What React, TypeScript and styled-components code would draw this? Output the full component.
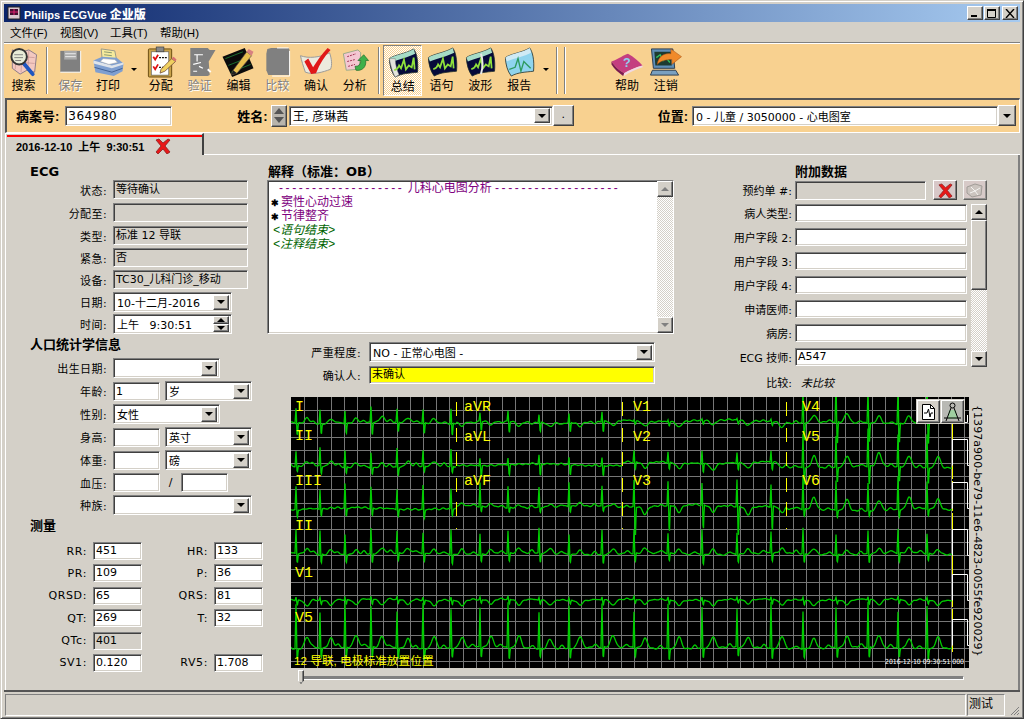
import React from "react";
import styled, { createGlobalStyle, css } from "styled-components";

const GlobalStyle = createGlobalStyle`
    * { box-sizing: border-box; }
    html, body { margin: 0; padding: 0; background: #d4d0c8; overflow: hidden; }
    body { font-family: "DejaVu Sans", "Noto Sans CJK SC", sans-serif; font-size: 11px; color: #000; }
`;

const CJK = `"Liberation Sans", "Noto Sans CJK SC", sans-serif`;
const FACE = "#d4d0c8";
const ORANGE = "#f8d190";

const sunken = css`
    border: 1px solid;
    border-color: #808080 #fff #fff #808080;
    box-shadow: inset 1px 1px 0 #404040, inset -1px -1px 0 #d4d0c8;
`;

const raised = css`
    background-color: ${FACE};
    border: 1px solid;
    border-color: #fff #404040 #404040 #fff;
    box-shadow: inset -1px -1px 0 #808080;
`;

const dither = css`
    background-color: ${FACE};
    background-image: conic-gradient(#fff 25%, transparent 0 50%, #fff 0 75%, transparent 0);
    background-size: 2px 2px;
`;

const Window = styled.div`
    width: 1024px;
    height: 719px;
    display: flex;
    flex-direction: column;
    padding: 3px 3px 2px 3px;
    background: ${FACE};
    border: 1px solid;
    border-color: ${FACE} #404040 #404040 ${FACE};
    box-shadow: inset 1px 1px 0 #fff, inset -1px -1px 0 #808080;
`;

const TitleBar = styled.div`
    height: 18px;
    flex: none;
    display: flex;
    align-items: center;
    padding: 0 2px 0 3px;
    background: linear-gradient(90deg, #0a246a, #a6caf0);
    color: #fff;
    font: bold 11px ${CJK};
`;

const TitleText = styled.span`
    margin-left: 3px;
    flex: 1;

    b {
        font-size: 12px;
        margin-left: 3px;
    }
`;

const CaptionButton = styled.div<{ $gap?: number }>`
    ${raised};
    width: 16px;
    height: 14px;
    margin-left: ${(p) => p.$gap ?? 0}px;
    display: flex;
    align-items: center;
    justify-content: center;
`;

const MenuBar = styled.div`
    height: 21px;
    flex: none;
    display: flex;
    align-items: center;
    padding-left: 6px;
    border-bottom: 1px solid #808080;
    font: 11.5px ${CJK};
`;

const MenuItem = styled.span`
    width: 50px;
    flex: none;
`;

const Toolbar = styled.div`
    height: 55px;
    flex: none;
    display: flex;
    align-items: flex-start;
    background: ${ORANGE};
    border-top: 1px solid #fff;
    padding: 1px 0 0 0;
`;

const ToolButton = styled.div<{ $disabled?: boolean; $pressed?: boolean; $left?: number }>`
    width: ${(p) => (p.$pressed ? 39 : 38.8)}px;
    height: 51px;
    flex: none;
    display: flex;
    flex-direction: column;
    align-items: center;
    margin-left: ${(p) => p.$left ?? 0}px;
    padding-top: 1px;
    font: 12px/14px ${CJK};
    color: ${(p) => (p.$disabled ? "#808080" : "#000")};
    text-shadow: ${(p) => (p.$disabled ? "1px 1px 0 #fff" : "none")};
    ${(p) =>
        p.$pressed &&
        css`
            background-color: ${ORANGE};
            background-image: conic-gradient(#fff 25%, transparent 0 50%, #fff 0 75%, transparent 0);
            background-size: 2px 2px;
            border: 1px solid;
            border-color: #808080 #fff #fff #808080;
        `}

    svg {
        display: block;
        width: 34px;
        height: 32px;
        flex: none;
        margin-bottom: 1px;
    }
`;

const ToolSep = styled.div<{ $left: number }>`
    width: 2px;
    height: 47px;
    flex: none;
    margin: 2px 0 0 ${(p) => p.$left}px;
    border-left: 1px solid #808080;
    border-right: 1px solid #fff;
`;

const DropArrow = styled.div<{ $w: number }>`
    width: ${(p) => p.$w}px;
    flex: none;
    height: 51px;
    display: flex;
    justify-content: center;
    padding-top: 23px;

    &::after {
        content: "";
        width: 0;
        height: 0;
        border: 3px solid transparent;
        border-top: 3px solid #000;
    }
`;

const PatientBar = styled.div`
    height: 35px;
    flex: none;
    display: flex;
    align-items: center;
    background: ${ORANGE};
    border-top: 2px solid #555;
    border-left: 2px solid #555;
    border-bottom: 1px solid #fff;
    border-right: 1px solid #fff;
    margin-left: 1px;
    padding-bottom: 1px;
`;

const BarLabel = styled.span<{ $left: number }>`
    font: bold 13px ${CJK};
    margin-left: ${(p) => p.$left}px;
    white-space: nowrap;
`;

const Field = styled.div<{ $w?: number; $h?: number; $bg?: string; $left?: number }>`
    ${sunken};
    width: ${(p) => (p.$w ? `${p.$w}px` : "auto")};
    height: ${(p) => p.$h ?? 19}px;
    flex: ${(p) => (p.$w ? "none" : "1")};
    margin-left: ${(p) => p.$left ?? 0}px;
    background: ${(p) => p.$bg ?? "#fff"};
    padding-left: 2px;
    line-height: ${(p) => (p.$h ?? 19) - 2}px;
    font-size: 11px;
    white-space: nowrap;
    overflow: hidden;
`;

const BigField = styled(Field)`
    font-size: 12px;
    letter-spacing: 0.5px;
`;

const ComboBox = styled.div<{ $w?: number; $h?: number; $left?: number }>`
    ${sunken};
    width: ${(p) => (p.$w ? `${p.$w}px` : "auto")};
    height: ${(p) => p.$h ?? 20}px;
    flex: ${(p) => (p.$w ? "none" : "1")};
    margin-left: ${(p) => p.$left ?? 0}px;
    background: #fff;
    display: flex;
    align-items: center;
    padding: 0 2px 0 3px;
    font-size: 11px;
    white-space: nowrap;
    overflow: hidden;
`;

const ComboText = styled.span<{ $size?: number }>`
    flex: 1;
    font-size: ${(p) => p.$size ?? 11}px;
`;

const ArrowDown = styled.div<{ $h?: number; $w?: number; $left?: number; $grey?: boolean }>`
    ${raised};
    width: ${(p) => p.$w ?? 16}px;
    height: ${(p) => p.$h ?? 15}px;
    flex: none;
    margin-left: ${(p) => p.$left ?? 0}px;
    display: flex;
    align-items: center;
    justify-content: center;

    &::after {
        content: "";
        border: 4px solid transparent;
        border-bottom: 0;
        border-top: 4px solid ${(p) => (p.$grey ? "#808080" : "#000")};
    }
`;

const ArrowUp = styled(ArrowDown)`
    &::after {
        border-top: 0;
        border-bottom: 4px solid ${(p) => (p.$grey ? "#808080" : "#000")};
    }
`;

const SortButton = styled.div`
    ${raised};
    width: 16px;
    height: 22px;
    flex: none;
    margin-left: 3px;
    background: #b8b4ac;
    display: flex;
    flex-direction: column;
    align-items: center;
    justify-content: center;
    gap: 3px;

    &::before {
        content: "";
        border: 5px solid transparent;
        border-top: 0;
        border-bottom: 6px solid #555;
    }

    &::after {
        content: "";
        border: 5px solid transparent;
        border-bottom: 0;
        border-top: 6px solid #555;
    }
`;

const DotButton = styled.div`
    ${raised};
    width: 21px;
    height: 21px;
    flex: none;
    text-align: center;
    line-height: 17px;
`;

const TabStrip = styled.div`
    height: 22px;
    flex: none;
    display: flex;
    align-items: stretch;
`;

const Tab = styled.div`
    width: 199px;
    margin-left: 1px;
    display: flex;
    align-items: center;
    padding: 2px 0 0 10px;
    border-top: 1px solid #fff;
    border-left: 1px solid #fff;
    border-right: 2px solid #404040;
    position: relative;
    font: bold 11px ${CJK};
    word-spacing: 3px;

    &::before {
        content: "";
        position: absolute;
        top: 1px;
        left: 1px;
        right: 0;
        height: 2px;
        background: #f00;
    }

    svg {
        margin-left: 11px;
    }
`;

const TabRest = styled.div`
    flex: 1;
    border-bottom: 1px solid #fff;
`;

const Content = styled.div`
    flex: 1;
    min-height: 0;
    display: flex;
    border-left: 1px solid #fff;
    border-right: 2px solid #808080;
    margin-left: 1px;
    padding: 8px 0 0 24px;
`;

const LeftColumn = styled.div`
    width: 233px;
    flex: none;
    display: flex;
    flex-direction: column;
`;

const Heading = styled.div<{ $mt?: number; $h?: number; $indent?: number }>`
    height: ${(p) => p.$h ?? 17}px;
    margin-top: ${(p) => p.$mt ?? 0}px;
    padding-left: ${(p) => p.$indent ?? 0}px;
    font: bold 13px/${(p) => p.$h ?? 17}px "DejaVu Sans", "Noto Sans CJK SC", sans-serif;
    white-space: nowrap;
`;

const FormRow = styled.div<{ $mt?: number }>`
    display: flex;
    align-items: center;
    margin-top: ${(p) => p.$mt ?? 0}px;
`;

const Label = styled.span<{ $w: number; $gap?: number; $sp?: number }>`
    width: ${(p) => p.$w}px;
    flex: none;
    margin-right: ${(p) => p.$gap ?? 6}px;
    text-align: right;
    font-size: 11px;
    letter-spacing: ${(p) => p.$sp ?? 0.4}px;
    white-space: nowrap;
`;

const Slash = styled.span`
    width: 21px;
    flex: none;
    text-align: center;
`;

const SpinGroup = styled.div`
    display: flex;
    flex-direction: column;
    flex: none;
    width: 16px;
`;

const MeasureGrid = styled.div`
    display: grid;
    grid-template-columns: 57px 49px 60px 49px;
    column-gap: 6px;
    grid-auto-rows: 18px;
    row-gap: 4.4px;
    margin-top: 8px;
    align-items: center;

    span {
        text-align: right;
        letter-spacing: 0.6px;
    }
`;

const RightColumn = styled.div`
    width: 733px;
    flex: none;
    margin-left: 4px;
    display: flex;
    flex-direction: column;
`;

const TopArea = styled.div`
    height: 234px;
    flex: none;
    display: flex;
`;

const InterpPanel = styled.div`
    width: 407px;
    flex: none;
`;

const InterpBox = styled.div`
    ${sunken};
    height: 154px;
    background: #fff;
    display: flex;
`;

const InterpText = styled.div`
    flex: 1;
    padding: 0 0 0 3px;
    overflow: hidden;
`;

const InterpLine = styled.div<{ $note?: boolean; $center?: boolean }>`
    height: 14px;
    line-height: 14px;
    font-size: 12px;
    color: ${(p) => (p.$note ? "#006400" : "#800080")};
    font-style: ${(p) => (p.$note ? "italic" : "normal")};
    font-family: ${CJK};
    padding-left: ${(p) => (p.$center ? 8 : p.$note ? 2 : 0)}px;
    white-space: nowrap;

    b {
        color: #000;
        font-size: 9px;
        margin-right: 2px;
    }
`;

const DashRun = styled.span`
    letter-spacing: 2.6px;
`;

const VScroll = styled.div<{ $w?: number }>`
    ${dither};
    width: ${(p) => p.$w ?? 16}px;
    flex: none;
    display: flex;
    flex-direction: column;
    justify-content: space-between;
`;

const AddPanel = styled.div`
    width: 305px;
    flex: none;
    margin-left: 18px;
`;

const AddRows = styled.div`
    display: flex;
    margin-top: 4px;
`;

const AddFields = styled.div`
    width: 275px;
    flex: none;
`;

const IconButton = styled.div<{ $left: number; $dim?: boolean }>`
    ${raised};
    width: 24px;
    height: 20px;
    flex: none;
    margin-left: ${(p) => p.$left}px;
    background: #d8c8c8;
    opacity: ${(p) => (p.$dim ? 0.75 : 1)};
    display: flex;
    align-items: center;
    justify-content: center;
`;

const ScrollThumb = styled.div`
    ${raised};
    height: 70px;
    width: 16px;
    flex: none;
`;

const ScrollColumn = styled(VScroll)`
    margin-left: 4px;
    justify-content: flex-start;
    height: 163px;
`;

const ScrollFill = styled.div`
    flex: 1;
`;

const Compare = styled.em`
    margin-left: 6px;
    font-size: 11px;
`;

const EcgRow = styled.div`
    margin: 0 0 0 24px;
    display: flex;
    height: 271px;
    flex: none;
`;

const EcgFrame = styled.div`
    width: 678px;
    height: 271px;
    flex: none;
    position: relative;
    background: #000;

    > svg {
        display: block;
    }
`;

const EcgTools = styled.div`
    position: absolute;
    top: 2px;
    right: 4px;
    display: flex;
    gap: 1px;
    padding: 1px;
    background: ${FACE};
`;

const EcgToolButton = styled.div<{ $pressed?: boolean }>`
    ${raised};
    width: 23px;
    height: 23px;
    background: ${(p) => (p.$pressed ? "#b9b9b4" : FACE)};
    display: flex;
    align-items: center;
    justify-content: center;
`;

const StudyId = styled.div`
    writing-mode: vertical-rl;
    margin-left: 2px;
    padding-top: 8px;
    font-size: 11px;
    letter-spacing: 0.05px;
    white-space: nowrap;
`;

const SliderRow = styled.div`
    height: 16px;
    width: 666px;
    margin: 2px 0 0 31px;
    position: relative;
    display: flex;
    align-items: center;
`;

const SliderTrack = styled.div`
    flex: 1;
    height: 4px;
    ${sunken};
    box-shadow: none;
    background: #808080;
`;

const SliderThumb = styled.div`
    position: absolute;
    left: 0;
    top: 0;
    width: 6px;
    height: 14px;
    ${raised};
    clip-path: polygon(0 0, 100% 0, 100% 75%, 50% 100%, 0 75%);
`;

const StatusBar = styled.div`
    height: 26px;
    flex: none;
    display: flex;
    align-items: stretch;
    border-top: 2px solid #555;
    padding: 2px 14px 0 1px;
    position: relative;
`;

const StatusPane = styled.div<{ $w?: number }>`
    width: ${(p) => (p.$w ? `${p.$w}px` : "auto")};
    flex: ${(p) => (p.$w ? "none" : "1")};
    margin-right: 1px;
    border: 1px solid;
    border-color: #808080 #fff #fff #808080;
    padding-left: 1px;
    line-height: 19px;
    font-size: 12px;
`;

const Grip = styled.svg`
    position: absolute;
    right: 0;
    bottom: 0;
`;

/* ---------- icons ---------- */

const EcgSheet: React.FC<{ split?: boolean; light?: boolean; curl?: boolean }> = ({ split, light, curl }) => (
    <svg viewBox="0 0 34 33">
        <path
            d="M3 12C8 8 20 7 28 2c3 4 5 12 4 24-8 1-16 1-23 5C5 26 3 18 3 12z"
            fill={light ? "#8fd4ee" : "#060a3a"}
            stroke="#1b2a2a"
            strokeWidth={0.8}
        />
        <path d="M3 12C8 8 20 7 28 2l1.500 5C22 11 11 13 4.500 16z" fill={light ? "#cfeaf5" : "#a6dcc8"} />
        {curl && <path d="M3 12c1 6 3 14 6 19 2-1 3-2 4-2-2-5-4-10-4-17z" fill="#e4e4dc" stroke="#777" strokeWidth={0.5} />}
        {light ? (
            <path d="M7 24l6-2 3-9 3 13 3-10 3 3 4 4" fill="none" stroke="#2e9a5e" strokeWidth={1.4} />
        ) : (
            <path d="M8 24c3-1 4-2 5-5l2 3 3-9 2 10 3-4 3 2 2-10 1 12" fill="none" stroke="#8fe03c" strokeWidth={1.8} />
        )}
        {split && <path d="M18 8c2 6 2 14 0 21" fill="none" stroke="#e8e8e8" strokeWidth={2} />}
    </svg>
);

const SearchIcon = () => (
    <svg viewBox="0 0 34 33">
        <path d="M6 4l8 3 9-3 8 5-2 18-8-2-7 4-8-6z" fill="#f3c8c0" stroke="#8a7a88" />
        <path d="M10 6l-1 18M16 7l-1 20M23 5l-1 20M5 10l24 2M6 16l23 2" stroke="#b88" strokeWidth={0.6} />
        <path d="M17 17l10 12" stroke="#1f56c0" strokeWidth={4} strokeLinecap="round" />
        <circle cx="13" cy="11" r="8" fill="#e8ecd8" stroke="#333" strokeWidth={2} />
        <path d="M8 9h9M8 12h9M9 15h6" stroke="#777" strokeWidth={0.9} />
    </svg>
);

const SaveIcon = () => (
    <svg viewBox="0 0 34 33">
        <rect x="7" y="5" width="21" height="22" fill="#808080" />
        <path d="M28 5v22H7" fill="none" stroke="#fff" />
        <rect x="11" y="5" width="13" height="9" fill="#aaa" />
        <path d="M12 8h11M12 11h11" stroke="#eee" />
    </svg>
);

const PrintIcon = () => (
    <svg viewBox="0 0 34 33">
        <path d="M10 3l14 2 2 10-15-1z" fill="#f6ea9c" stroke="#998" />
        <path d="M13 6l8 1M13 9l8 1" stroke="#8a9a70" />
        <path d="M2 15l9-4 15 1 7 6-1 8-9 5-19-4z" fill="#7f9fd0" />
        <path d="M2 15l19 5 12-3v2l-12 4-19-5z" fill="#dfe4ea" />
        <path d="M12 13l12 1 3 3-9 2-9-3z" fill="#fff" stroke="#999" strokeWidth={0.5} />
        <path d="M3 22l18 5 11-4" fill="none" stroke="#3f5f95" />
    </svg>
);

const AssignIcon = () => (
    <svg viewBox="0 0 34 33">
        <rect x="4" y="3" width="24" height="29" rx="1" fill="#c9a24a" stroke="#6a4c12" />
        <rect x="7" y="6" width="18" height="24" fill="#fff" stroke="#555" strokeWidth={0.6} />
        <rect x="12" y="1" width="8" height="5" fill="#888" stroke="#333" strokeWidth={0.6} />
        <path d="M9 11l2 3 3-5M9 21l2 3 3-5" fill="none" stroke="#e01010" strokeWidth={1.8} />
        <path d="M15 12h8M15 22h5" stroke="#111" strokeDasharray="2 1" strokeWidth={1.4} />
        <path d="M17 24l11-11 4 3-11 10-5 2z" fill="#f0d060" stroke="#704a3a" strokeWidth={0.8} />
        <path d="M28 13l4 3 1-2-3-3z" fill="#d87070" />
    </svg>
);

const VerifyIcon = () => (
    <svg viewBox="0 0 34 33">
        <path d="M7 2h18l2 2h6l-7 12 1 14-2 1H7z" fill="#808080" />
        <path d="M11 9h9M14 9v7M10 19l8-2M16 21l4 2M10 26h4" stroke="#fff" strokeWidth={1.2} />
        <path d="M25 24l3 3" stroke="#fff" strokeWidth={2} />
    </svg>
);

const EditIcon = () => (
    <svg viewBox="0 0 34 33">
        <path d="M1 11L24 2l9 21-22 9z" fill="#0b0b0b" />
        <path d="M4 13l18-7M7 20l18-7M10 27l20-8" stroke="#1f8a3a" strokeWidth={0.8} />
        <path d="M12 25l14-19 5 4-15 18-6 2z" fill="#e8c050" stroke="#544" strokeWidth={0.7} />
        <path d="M26 6l2-3 5 3-2 4z" fill="#d88080" />
        <path d="M10 30l2-5 4 3z" fill="#222" />
    </svg>
);

const CompareIcon = () => (
    <svg viewBox="0 0 34 33">
        <path d="M7 3l4-1h18l1 2v26H8l-2-5V8z" fill="#808080" />
        <path d="M17 2h12" stroke="#fff" />
        <path d="M30 5v26H12" fill="none" stroke="#fff" />
    </svg>
);

const ConfirmIcon = () => (
    <svg viewBox="0 0 34 33">
        <path d="M1 10c8 3 20 2 30-3 2 6 3 12 1 17-8 3-18 6-26 3C4 21 2 15 1 10z" fill="#eceade" stroke="#999" />
        <path d="M9 13l5 9c5-8 9-14 15-20l3 2c-6 6-11 14-15 24l-5 1-7-13z" fill="#e01818" />
    </svg>
);

const AnalyzeIcon = () => (
    <svg viewBox="0 0 34 33">
        <path d="M5 8l15-4 3 3-2 17-13 1z" fill="#f4c7d2" stroke="#9a8" />
        <path d="M9 11l9-3M9 16l8-2M10 21l7-2" stroke="#a03050" strokeDasharray="2 1" />
        <path d="M18 25c6 1 11-3 10-10h3l-5-6-6 6h3c0 4-2 6-6 6z" fill="#3fb04a" stroke="#1e6a2a" strokeWidth={0.7} />
    </svg>
);

const HelpIcon = () => (
    <svg viewBox="0 0 34 33">
        <path d="M1 16C9 13 14 9 18 8c6 3 11 8 15 12-7 2-14 5-19 8-5-3-9-6-13-12z" fill="#c43f80" />
        <path d="M1 16c4 6 8 9 13 12l-1 3C8 27 4 24 1 19z" fill="#7a1a50" />
        <path d="M14 28c5-3 12-6 19-8v2c-7 2-13 5-19 9z" fill="#f0d8e4" />
        <text x="13" y="22" fontSize="13" fontWeight="700" fill="#8fd0f0" fontFamily="Liberation Sans">?</text>
    </svg>
);

const LogoutIcon = () => (
    <svg viewBox="0 0 34 33">
        <path d="M2 3h22l2 20H4z" fill="#5f8fb8" stroke="#2a3c50" />
        <path d="M5 6h17l1 14H6z" fill="#1c3a30" />
        <path d="M7 12l4-3 3 6 3-3 4 5" fill="none" stroke="#2fc060" strokeWidth={1.4} />
        <path d="M3 25h24l3 5H1z" fill="#7aa0c0" stroke="#2a3c50" />
        <path d="M8 19c1-8 7-12 14-11V3l11 8-10 8v-5c-6 0-11 1-15 5z" fill="#f08a2a" stroke="#a04a10" strokeWidth={0.5} />
    </svg>
);

const RedX: React.FC<{ size: number }> = ({ size }) => (
    <svg width={size} height={size} viewBox="0 0 16 16">
        <path
            d="M1 2l3-1 4 4 5-4 2 1-5 6 5 6-3 2-4-5-5 5-2-2 5-6z"
            fill="#e81818"
            stroke="#8a2020"
            strokeWidth={0.8}
        />
    </svg>
);

const WorkIcon = () => (
    <svg width="20" height="16" viewBox="0 0 20 16">
        <path d="M2 5l8-3 7 2-1 9-9 2-5-4z" fill="#c8c0bc" stroke="#908c88" />
        <path d="M6 5l4 4 5-3M5 11l5-2 3 4" fill="none" stroke="#fff" />
    </svg>
);

const SheetPlusIcon = () => (
    <svg width="15" height="18" viewBox="0 0 15 18">
        <path d="M1.500 1.500h8l4 4v11h-12z" fill="#fff" stroke="#000" />
        <path d="M9.500 1.500v4h4" fill="none" stroke="#000" />
        <path d="M3 10h3l1.500-4 1.500 8 1-4h2" fill="none" stroke="#000" />
    </svg>
);

const CaliperIcon = () => (
    <svg width="19" height="20" viewBox="0 0 19 20">
        <path d="M6 8c-1 4-1 7-1 9h9c0-3 0-5-1-9z" fill="#9fcfa0" />
        <circle cx="9.500" cy="3.500" r="2.500" fill="none" stroke="#000" />
        <path d="M8 6L3 19M11 6l5 13M1 16h17" fill="none" stroke="#000" />
    </svg>
);

/* ---------- ecg drawing ---------- */

const ORIGIN_X = 291;
const ORIGIN_Y = 397;
const BEATS = [296, 320, 345, 371, 397, 423, 451, 480, 508, 539, 569, 602, 634, 668, 702, 737, 771, 803, 836, 868, 898, 927];

interface ITrace {
    from: number;
    to: number;
    base: number;
    r: number;
    s: number;
    p: number;
    t: number;
    seed: number;
    gain?: number;
}

const TRACES: ITrace[] = [
    { from: 291, to: 456, base: 423, r: 14, s: 13, p: 2, t: 5, seed: 1 },
    { from: 456, to: 622, base: 422, r: 9, s: 12, p: -1.500, t: -4, seed: 2 },
    { from: 622, to: 786, base: 421, r: 2, s: 4, p: 1, t: -5, seed: 3 },
    { from: 786, to: 952, base: 423, r: 34, s: 24, p: 2, t: 8, seed: 4 },
    { from: 291, to: 456, base: 467, r: 17, s: 8, p: 3, t: 5, seed: 5 },
    { from: 456, to: 622, base: 465, r: 8, s: 13, p: 1, t: 0.500, seed: 6 },
    { from: 622, to: 786, base: 463, r: 12, s: 9, p: 1, t: -6, seed: 7 },
    { from: 786, to: 952, base: 467, r: 34, s: 20, p: 2, t: 12, seed: 8 },
    { from: 291, to: 456, base: 509, r: 22, s: 9, p: 1, t: 1, seed: 9 },
    { from: 456, to: 622, base: 507, r: 22, s: 6, p: 2, t: 3, seed: 10 },
    { from: 622, to: 786, base: 506, r: 24, s: 32, p: 1, t: -7, seed: 11 },
    { from: 786, to: 952, base: 510, r: 30, s: 8, p: 2, t: 11, seed: 12 },
    { from: 291, to: 952, base: 554, r: 23, s: 10, p: 3, t: 5, seed: 13 },
    { from: 291, to: 952, base: 600, r: 3, s: 5, p: 1, t: -5, seed: 14, gain: 0.6 },
    { from: 291, to: 952, base: 648, r: 41, s: 12, p: 3, t: 11, seed: 15 },
];

const gauss = (d: number, w: number) => Math.exp(-(d * d) / (2 * w * w));
const spike = (d: number, w: number) => Math.max(0, 1 - Math.abs(d) / w);

const tracePoints = (tr: ITrace) => {
    const pts: string[] = [];
    for (let x = tr.from; x <= tr.to; x += 0.5) {
        let v = 0;
        BEATS.forEach((b, i) => {
            const d = x - b;
            if (Math.abs(d) > 20) return;
            const k = 1 + 0.12 * Math.sin(i * 2.3 + tr.seed);
            v += tr.p * gauss(d + 7, 1.8);
            v += tr.r * k * spike(d, 1);
            v -= tr.s * k * spike(d - 1.3, 1);
            v += tr.t * k * gauss(d - 11, 2.4);
        });
        const wander = (tr.gain ?? 1) * (0.9 * Math.sin(x * 0.05 + tr.seed) + 0.5 * Math.sin(x * 0.9 + tr.seed * 2));
        pts.push(`${x - ORIGIN_X},${(tr.base - v - wander - ORIGIN_Y).toFixed(1)}`);
    }
    return pts.join(" ");
};

const LEAD_LABELS: [string, number, number][] = [
    ["I", 295, 411],
    ["II", 295, 440],
    ["III", 295, 485],
    ["II", 295, 530],
    ["aVR", 464, 411],
    ["aVL", 464, 441],
    ["aVF", 464, 485],
    ["V1", 633, 411],
    ["V2", 633, 441],
    ["V3", 633, 485],
    ["V4", 802, 411],
    ["V5", 802, 441],
    ["V6", 802, 485],
    ["V1", 295, 577],
    ["V5", 295, 622],
];

const PULSE_BASES = [465, 508, 555, 600, 645];
const GRID = 13.2;

const EcgChart = () => {
    const vLines = Array.from({ length: 51 }, (_, i) => Math.round((i + 1) * GRID) + 0.5);
    const hLines = Array.from({ length: 20 }, (_, i) => Math.round((i + 1) * GRID) + 0.5);
    return (
        <svg width="678" height="271" viewBox="0 0 678 271">
            <g stroke="#777" strokeWidth={1}>
                {vLines.map((x) => (
                    <line key={`v${x}`} x1={x} y1={0} x2={x} y2={271} />
                ))}
                {hLines.map((y) => (
                    <line key={`h${y}`} x1={0} y1={y} x2={678} y2={y} />
                ))}
            </g>
            {TRACES.map((tr) => (
                <polyline key={tr.seed} points={tracePoints(tr)} fill="none" stroke="#00cc00" strokeWidth={1.3} />
            ))}
            {[165.5, 331.5, 495.5].map((x) => (
                <line key={x} x1={x} y1={5} x2={x} y2={132} stroke="#ffff00" strokeWidth={1} strokeDasharray="14 12 14 10" />
            ))}
            <line x1={661.5} y1={20} x2={661.500} y2={255} stroke="#ffff00" strokeDasharray="30 2" />
            {PULSE_BASES.map((b) => {
                const y = b - ORIGIN_Y + 0.5;
                return <path key={b} d={`M661.500 ${y}V${y - 26}H676.500V${y}H678`} fill="none" stroke="#fff" />;
            })}
            <path d="M661.500 25.500H676.500V18" fill="none" stroke="#fff" />
            {LEAD_LABELS.map(([t, x, y]) => (
                <text key={`${t}${x}${y}`} x={x - ORIGIN_X} y={y - ORIGIN_Y} fill="#ffff00" fontSize="15" fontFamily="Liberation Mono">
                    {t}
                </text>
            ))}
            <text x={3} y={268} fill="#ffff00" fontSize="11.700" fontFamily="Liberation Sans, Noto Sans CJK SC">
                12 导联, 电极标准放置位置
            </text>
            <text x={594} y={267} fill="#fff" fontSize="7" fontFamily="DejaVu Sans" textLength={79} lengthAdjust="spacingAndGlyphs">
                2016-12-10 09:30:51 000
            </text>
        </svg>
    );
};

/* ---------- page ---------- */

const MEASURES: [string, string, boolean?][] = [
    ["RR:", "451"],
    ["HR:", "133"],
    ["PR:", "109"],
    ["P:", "36"],
    ["QRSD:", "65"],
    ["QRS:", "81"],
    ["QT:", "269"],
    ["T:", "32"],
    ["QTc:", "401", true],
    ["", ""],
    ["SV1:", "0.120"],
    ["RV5:", "1.708"],
];

const App = () => {
    return (
        <>
            <GlobalStyle />
            <Window>
                <TitleBar>
                    <svg width="14" height="14" viewBox="0 0 14 14">
                        <rect x="1" y="1" width="12" height="12" fill="#d8c8d0" stroke="#222" />
                        <rect x="3" y="3" width="8" height="6" fill="#401030" />
                        <path d="M3 6h8M7 3v6" stroke="#e02070" />
                    </svg>
                    <TitleText>Philips ECGVue<b>企业版</b></TitleText>
                    <CaptionButton>
                        <svg width="10" height="9" viewBox="0 0 10 9">
                            <rect x="1" y="6" width="6" height="2" fill="#000" />
                        </svg>
                    </CaptionButton>
                    <CaptionButton $gap={1}>
                        <svg width="10" height="9" viewBox="0 0 10 9">
                            <path d="M.5 1.500h8v7h-8z" fill="none" stroke="#000" />
                            <rect x="0" y="0" width="9" height="2" fill="#000" />
                        </svg>
                    </CaptionButton>
                    <CaptionButton $gap={2}>
                        <svg width="10" height="9" viewBox="0 0 10 9">
                            <path d="M1 0l8 9M9 0l-8 9" stroke="#000" strokeWidth={1.4} />
                        </svg>
                    </CaptionButton>
                </TitleBar>

                <MenuBar>
                    <MenuItem>文件(F)</MenuItem>
                    <MenuItem>视图(V)</MenuItem>
                    <MenuItem>工具(T)</MenuItem>
                    <MenuItem>帮助(H)</MenuItem>
                </MenuBar>

                <Toolbar>
                    <ToolButton><SearchIcon />搜索</ToolButton>
                    <ToolSep $left={3} />
                    <ToolButton $left={3} $disabled><SaveIcon />保存</ToolButton>
                    <ToolButton $left={-1}><PrintIcon />打印</ToolButton>
                    <DropArrow $w={14} />
                    <ToolButton><AssignIcon />分配</ToolButton>
                    <ToolButton $disabled><VerifyIcon />验证</ToolButton>
                    <ToolButton><EditIcon />编辑</ToolButton>
                    <ToolButton $disabled><CompareIcon />比较</ToolButton>
                    <ToolButton><ConfirmIcon />确认</ToolButton>
                    <ToolButton><AnalyzeIcon />分析</ToolButton>
                    <ToolSep $left={4} />
                    <ToolButton $left={3} $pressed><EcgSheet curl />总结</ToolButton>
                    <ToolButton><EcgSheet />语句</ToolButton>
                    <ToolButton><EcgSheet split />波形</ToolButton>
                    <ToolButton><EcgSheet light />报告</ToolButton>
                    <DropArrow $w={14} />
                    <ToolSep $left={3} />
                    <ToolSep $left={6} />
                    <ToolButton $left={42}><HelpIcon />帮助</ToolButton>
                    <ToolButton><LogoutIcon />注销</ToolButton>
                </Toolbar>

                <PatientBar>
                    <BarLabel $left={9}>病案号:</BarLabel>
                    <BigField $w={107} $h={20} $left={6}>364980</BigField>
                    <BarLabel $left={65}>姓名:</BarLabel>
                    <SortButton />
                    <ComboBox $w={264} $h={20} $left={2}>
                        <ComboText $size={12}>王, 彦琳茜</ComboText>
                        <ArrowDown $h={15} />
                    </ComboBox>
                    <DotButton>.</DotButton>
                    <BarLabel $left={84}>位置:</BarLabel>
                    <ComboBox $w={306} $h={20} $left={4}>
                        <ComboText>0 - 儿童 / 3050000 - 心电图室</ComboText>
                    </ComboBox>
                    <ArrowDown $w={18} $h={21} />
                </PatientBar>

                <TabStrip>
                    <Tab>
                        2016-12-10 上午 9:30:51
                        <RedX size={16} />
                    </Tab>
                    <TabRest />
                </TabStrip>

                <Content>
                    <LeftColumn>
                        <Heading>ECG</Heading>
                        <FormRow>
                            <Label $w={77}>状态:</Label>
                            <Field $w={135} $bg={FACE}>等待确认</Field>
                        </FormRow>
                        <FormRow $mt={4}>
                            <Label $w={77}>分配至:</Label>
                            <Field $w={135} $bg={FACE} />
                        </FormRow>
                        <FormRow $mt={4}>
                            <Label $w={77}>类型:</Label>
                            <Field $w={135} $bg={FACE}>标准 12 导联</Field>
                        </FormRow>
                        <FormRow $mt={3}>
                            <Label $w={77}>紧急:</Label>
                            <Field $w={135} $bg={FACE}>否</Field>
                        </FormRow>
                        <FormRow $mt={3}>
                            <Label $w={77}>设备:</Label>
                            <Field $w={135} $bg={FACE}>TC30_儿科门诊_移动</Field>
                        </FormRow>
                        <FormRow $mt={3}>
                            <Label $w={77}>日期:</Label>
                            <ComboBox $w={119}>
                                <ComboText>10-十二月-2016</ComboText>
                                <ArrowDown />
                            </ComboBox>
                        </FormRow>
                        <FormRow $mt={2}>
                            <Label $w={77}>时间:</Label>
                            <ComboBox $w={119}>
                                <ComboText>上午&nbsp;&nbsp;&nbsp;9:30:51</ComboText>
                                <SpinGroup>
                                    <ArrowUp $h={8} />
                                    <ArrowDown $h={8} />
                                </SpinGroup>
                            </ComboBox>
                        </FormRow>

                        <Heading $mt={2} $h={18}>人口统计学信息</Heading>
                        <FormRow $mt={4}>
                            <Label $w={77}>出生日期:</Label>
                            <ComboBox $w={107}><ComboText /><ArrowDown /></ComboBox>
                        </FormRow>
                        <FormRow $mt={3}>
                            <Label $w={77}>年龄:</Label>
                            <Field $w={47}>1</Field>
                            <ComboBox $w={87} $left={5}><ComboText>岁</ComboText><ArrowDown /></ComboBox>
                        </FormRow>
                        <FormRow $mt={3}>
                            <Label $w={77}>性别:</Label>
                            <ComboBox $w={107}><ComboText>女性</ComboText><ArrowDown /></ComboBox>
                        </FormRow>
                        <FormRow $mt={3}>
                            <Label $w={77}>身高:</Label>
                            <Field $w={47} />
                            <ComboBox $w={87} $left={5}><ComboText>英寸</ComboText><ArrowDown /></ComboBox>
                        </FormRow>
                        <FormRow $mt={3}>
                            <Label $w={77}>体重:</Label>
                            <Field $w={47} />
                            <ComboBox $w={87} $left={5}><ComboText>磅</ComboText><ArrowDown /></ComboBox>
                        </FormRow>
                        <FormRow $mt={3}>
                            <Label $w={77}>血压:</Label>
                            <Field $w={47} />
                            <Slash>/</Slash>
                            <Field $w={47} />
                        </FormRow>
                        <FormRow $mt={3}>
                            <Label $w={77}>种族:</Label>
                            <ComboBox $w={139}><ComboText /><ArrowDown /></ComboBox>
                        </FormRow>

                        <Heading $mt={2}>测量</Heading>
                        <MeasureGrid>
                            {MEASURES.map(([label, value, off], i) =>
                                label ? (
                                    <React.Fragment key={label}>
                                        <span>{label}</span>
                                        <Field $w={49} $h={18} $bg={off ? FACE : "#fff"}>{value}</Field>
                                    </React.Fragment>
                                ) : (
                                    <React.Fragment key={i}>
                                        <i />
                                        <i />
                                    </React.Fragment>
                                )
                            )}
                        </MeasureGrid>
                    </LeftColumn>

                    <RightColumn>
                        <TopArea>
                            <InterpPanel>
                                <Heading $indent={1}>解释（标准：OB）</Heading>
                                <InterpBox>
                                    <InterpText>
                                        <InterpLine $center>
                                            <DashRun>-------------------</DashRun> 儿科心电图分析 <DashRun>-------------------</DashRun>
                                        </InterpLine>
                                        <InterpLine><b>✱</b>窦性心动过速</InterpLine>
                                        <InterpLine><b>✱</b>节律整齐</InterpLine>
                                        <InterpLine $note>&lt;语句结束&gt;</InterpLine>
                                        <InterpLine $note>&lt;注释结束&gt;</InterpLine>
                                    </InterpText>
                                    <VScroll>
                                        <ArrowUp $h={16} $grey />
                                        <ArrowDown $h={16} $grey />
                                    </VScroll>
                                </InterpBox>
                                <FormRow $mt={8}>
                                    <Label $w={94} $gap={8}>严重程度:</Label>
                                    <ComboBox $w={286}>
                                        <ComboText>NO - 正常心电图 -</ComboText>
                                        <ArrowDown />
                                    </ComboBox>
                                </FormRow>
                                <FormRow $mt={4}>
                                    <Label $w={94} $gap={8}>确认人:</Label>
                                    <Field $w={286} $h={18} $bg="#ffff00">未确认</Field>
                                </FormRow>
                            </InterpPanel>

                            <AddPanel>
                                <Heading $indent={103}>附加数据</Heading>
                                <FormRow>
                                    <Label $w={100} $gap={3} $sp={0}>预约单 #:</Label>
                                    <Field $w={131} $bg={FACE} />
                                    <IconButton $left={7}><RedX size={15} /></IconButton>
                                    <IconButton $left={6} $dim><WorkIcon /></IconButton>
                                </FormRow>
                                <AddRows>
                                    <AddFields>
                                        <FormRow>
                                            <Label $w={100} $gap={3} $sp={0}>病人类型:</Label>
                                            <Field $w={172} $h={18} />
                                        </FormRow>
                                        {["用户字段 2:", "用户字段 3:", "用户字段 4:", "申请医师:", "病房:"].map((t) => (
                                            <FormRow key={t} $mt={6}>
                                                <Label $w={100} $gap={3} $sp={0}>{t}</Label>
                                                <Field $w={172} $h={18} />
                                            </FormRow>
                                        ))}
                                        <FormRow $mt={6}>
                                            <Label $w={100} $gap={3} $sp={0}>ECG 技师:</Label>
                                            <Field $w={172} $h={18}>A547</Field>
                                        </FormRow>
                                    </AddFields>
                                    <ScrollColumn>
                                        <ArrowUp $h={16} />
                                        <ScrollThumb />
                                        <ScrollFill />
                                        <ArrowDown $h={16} />
                                    </ScrollColumn>
                                </AddRows>
                                <FormRow $mt={7}>
                                    <Label $w={100} $gap={3} $sp={0}>比较:</Label>
                                    <Compare>未比较</Compare>
                                </FormRow>
                            </AddPanel>
                        </TopArea>

                        <EcgRow>
                            <EcgFrame>
                                <EcgChart />
                                <EcgTools>
                                    <EcgToolButton><SheetPlusIcon /></EcgToolButton>
                                    <EcgToolButton $pressed><CaliperIcon /></EcgToolButton>
                                </EcgTools>
                            </EcgFrame>
                            <StudyId>{"{1397a900-be79-11e6-4823-0055fe920029}"}</StudyId>
                        </EcgRow>
                        <SliderRow>
                            <SliderTrack />
                            <SliderThumb />
                        </SliderRow>
                    </RightColumn>
                </Content>

                <StatusBar>
                    <StatusPane />
                    <StatusPane $w={38}>测试</StatusPane>
                    <Grip width="12" height="12" viewBox="0 0 12 12">
                        <path d="M11 3l-8 8M11 6l-5 5M11 9l-2 2" stroke="#808080" />
                    </Grip>
                </StatusBar>
            </Window>
        </>
    );
};

export default App;
